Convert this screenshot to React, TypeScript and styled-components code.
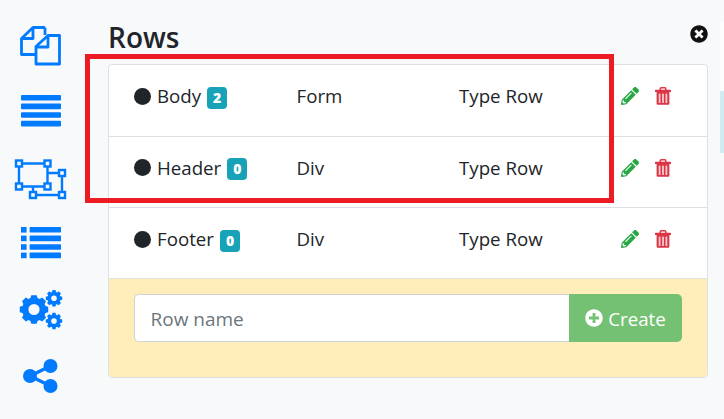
import React from "react";
import styled, { createGlobalStyle } from "styled-components";
import { FaPencilAlt, FaTimesCircle, FaPlusCircle } from "react-icons/fa";

const Global = createGlobalStyle`
  html, body { margin: 0; padding: 0; background: #f8f9fa; }
  body { font-family: "Open Sans", "Noto Sans", "Liberation Sans", sans-serif; color: #212529; }
`;

const Page = styled.div`
  position: relative;
  width: 724px;
  height: 419px;
  overflow: hidden;
  display: flex;
`;

const Rail = styled.nav`
  width: 80px;
  margin-right: 28px;
  display: flex;
  flex-direction: column;
  color: #007bff;
`;

const RailSlot = styled.div<{ $top: number; $left: number; $height: number }>`
  height: ${(p) => p.$height}px;
  margin-top: ${(p) => p.$top}px;
  padding-left: ${(p) => p.$left}px;
  display: flex;
  line-height: 0;
`;

const Main = styled.main`
  width: 600px;
  flex: none;
`;

const Title = styled.h1`
  margin: 19px 0 8px;
  font-size: 28px;
  line-height: 37px;
  font-weight: 600;
`;

const Card = styled.section`
  border: 1px solid #dfe0e1;
  border-radius: 4px;
  background: #fff;
  overflow: hidden;
  padding-top: 0.2px;
`;

const Row = styled.div`
  height: 71.4px;
  display: grid;
  grid-template-columns: 162.5px 162.5px 1fr 61px;
  padding: 17.1px 25px 0;
  align-items: start;
  box-sizing: border-box;
  border-bottom: 1px solid #dfe0e1;
  font-size: 18.7px;
  line-height: 28px;
`;

const NameCell = styled.div`
  display: flex;
  align-items: center;
`;

const Dot = styled.span`
  width: 17px;
  height: 17px;
  border-radius: 50%;
  background: #212529;
  margin-right: 6px;
`;

const Badge = styled.span`
  margin: 3px 0 0 6px;
  padding: 0 6px;
  height: 22px;
  min-width: 8px;
  border-radius: 4px;
  background: #17a2b8;
  color: #fff;
  font-size: 14px;
  line-height: 22px;
  font-weight: 800;
`;

const Actions = styled.div`
  display: flex;
  align-items: center;
  gap: 16px;
  height: 28px;
  font-size: 18px;
`;

const Edit = styled.span`
  display: flex;
  color: #28a745;
`;

const Remove = styled.span`
  display: flex;
  color: #dc3545;
`;

const Footer = styled.form`
  height: 98px;
  box-sizing: border-box;
  background: #ffeeba;
  padding: 15px 25px;
  display: flex;
  align-items: flex-start;
`;

const NameInput = styled.input`
  flex: 1;
  min-width: 0;
  height: 48px;
  box-sizing: border-box;
  border: 1px solid #ced4da;
  border-right: 0;
  border-radius: 5px 0 0 5px;
  padding: 2px 16px 0 15.5px;
  font: inherit;
  font-size: 19px;
  background: #fff;
  &::placeholder { color: #6c757d; opacity: 1; }
`;

const CreateButton = styled.button`
  width: 113px;
  height: 48px;
  border: 0;
  border-radius: 0 5px 5px 0;
  background: #74c174;
  color: #fff;
  font: inherit;
  font-size: 18.7px;
  padding: 0;
  display: flex;
  align-items: center;
  justify-content: center;
  gap: 5px;
`;

const CloseIcon = styled.span`
  position: absolute;
  left: 690px;
  top: 25px;
  display: flex;
  font-size: 18px;
  color: #111;
`;

const Callout = styled.div`
  position: absolute;
  left: 720px;
  top: 22px;
  width: 4px;
  height: 69px;
  background: #fdfdfe;
`;

const CalloutTint = styled.div`
  position: absolute;
  left: 720px;
  top: 91px;
  width: 4px;
  height: 62px;
  background: #d1ecf1;
`;

const Highlight = styled.div`
  position: absolute;
  left: 85px;
  top: 54px;
  width: 529px;
  height: 149px;
  box-sizing: border-box;
  border: 5px solid #ed1c24;
  pointer-events: none;
`;

const CopyIcon = () => (
  <svg width="42" height="40" viewBox="0 0 42 40" fill="none" stroke="currentColor" strokeWidth="2.8" strokeLinejoin="round">
    <path d="M25 1.5H13L1.5 12.5V28.5H16" />
    <path d="M13 1.5V12.5H1.5" />
    <path d="M25 1.5V9" />
    <path d="M39.5 9.5H28L16 20.5V38H39.5Z" />
    <path d="M28 9.5V21H16" />
  </svg>
);

const BarsIcon = () => (
  <svg width="40" height="32" viewBox="0 0 40 32" fill="currentColor">
    <rect x="0" y="0" width="40" height="5.6" rx="1" />
    <rect x="0" y="8.6" width="40" height="5.6" rx="1" />
    <rect x="0" y="17.2" width="40" height="5.6" rx="1" />
    <rect x="0" y="25.8" width="40" height="5.6" rx="1" />
  </svg>
);

const UngroupIcon = () => {
  const handles = [
    [5, 4.5], [33.5, 4.5], [5, 27.5], [33.5, 27.5],
    [48, 14], [48, 36], [19, 36],
  ];
  return (
    <svg width="53" height="41" viewBox="0 0 53 41" fill="none" stroke="currentColor" strokeWidth="2.4">
      <path d="M5 4.5H33.5M5 4.5V27.5M33.5 4.5V27.5M5 27.5H33.5" />
      <path d="M33.5 14H48V36H19V27.5" />
      {handles.map(([x, y]) => (
        <rect key={`${x}-${y}`} x={x - 3} y={y - 3} width="6" height="6" fill="#f8f9fa" />
      ))}
    </svg>
  );
};

const ListIcon = () => (
  <svg width="40" height="32" viewBox="0 0 40 32" fill="currentColor">
    {[0, 8.6, 17.2, 25.6].map((y) => (
      <g key={y}>
        <rect x="0" y={y} width="5.6" height="5.6" />
        <rect x="8.6" y={y} width="31.4" height="5.6" rx="0.8" />
      </g>
    ))}
  </svg>
);

const gearPath = (cx: number, cy: number, outer: number, root: number, hole: number, teeth: number, phase: number) => {
  const step = (Math.PI * 2) / teeth;
  const pts: string[] = [];
  for (let i = 0; i < teeth; i++) {
    const a = phase + i * step;
    const add = (ang: number, r: number) =>
      pts.push(`${(cx + r * Math.cos(ang)).toFixed(2)} ${(cy + r * Math.sin(ang)).toFixed(2)}`);
    add(a - step * 0.38, root);
    add(a - step * 0.24, outer);
    add(a + step * 0.24, outer);
    add(a + step * 0.38, root);
  }
  return `M${pts.join("L")}Z M${cx - hole} ${cy}a${hole} ${hole} 0 1 0 ${hole * 2} 0a${hole} ${hole} 0 1 0 ${-hole * 2} 0Z`;
};

const CogsIcon = () => (
  <svg width="44" height="40" viewBox="0 0 44 40" fill="currentColor" fillRule="evenodd">
    <path d={gearPath(15, 19.5, 14.5, 12, 5.6, 8, 0)} />
    <path d={gearPath(35, 8.3, 8.4, 6.6, 2.8, 8, 0)} />
    <path d={gearPath(35, 31, 8.4, 6.6, 2.8, 8, 0)} />
  </svg>
);

const ShareIcon = () => (
  <svg width="36" height="36" viewBox="0 0 36 36" fill="currentColor" stroke="currentColor">
    <path d="M8 17L28.5 7M8 17L28.5 27" strokeWidth="3.6" fill="none" />
    <circle cx="8" cy="17" r="7" stroke="none" />
    <circle cx="28.5" cy="7" r="7" stroke="none" />
    <circle cx="28.5" cy="27" r="7" stroke="none" />
  </svg>
);

const TrashIcon = () => (
  <svg width="16" height="18" viewBox="0 0 16 18" fill="currentColor">
    <path d="M5.2 3V1.9C5.2 1.2 5.7.8 6.3.8h3.4c.6 0 1.1.4 1.1 1.1V3" fill="none" stroke="currentColor" strokeWidth="1.5" />
    <rect x="0" y="2.7" width="16" height="2.4" rx="0.5" />
    <path d="M1.6 5h12.8v11.2c0 .9-.6 1.6-1.5 1.6H3.1c-.9 0-1.5-.7-1.5-1.6z" />
    <rect x="3.7" y="6.6" width="1.8" height="9.4" fill="#f6c9ce" />
    <rect x="7.1" y="6.6" width="1.8" height="9.4" fill="#f6c9ce" />
    <rect x="10.5" y="6.6" width="1.8" height="9.4" fill="#f6c9ce" />
  </svg>
);

const rows = [
  { name: "Body", count: 2, tag: "Form" },
  { name: "Header", count: 0, tag: "Div" },
  { name: "Footer", count: 0, tag: "Div" },
];

export default function App() {
  return (
    <Page>
      <Global />
      <Rail>
        <RailSlot $top={26} $left={20} $height={40}><CopyIcon /></RailSlot>
        <RailSlot $top={29} $left={20.5} $height={32}><BarsIcon /></RailSlot>
        <RailSlot $top={32} $left={14} $height={41}><UngroupIcon /></RailSlot>
        <RailSlot $top={27} $left={20.5} $height={32}><ListIcon /></RailSlot>
        <RailSlot $top={31} $left={18.5} $height={40}><CogsIcon /></RailSlot>
        <RailSlot $top={29} $left={22} $height={36}><ShareIcon /></RailSlot>
      </Rail>
      <Main>
        <Title>Rows</Title>
        <Card>
          {rows.map((r) => (
            <Row key={r.name}>
              <NameCell>
                <Dot />
                {r.name}
                <Badge>{r.count}</Badge>
              </NameCell>
              <div>{r.tag}</div>
              <div>Type Row</div>
              <Actions>
                <Edit><FaPencilAlt /></Edit>
                <Remove><TrashIcon /></Remove>
              </Actions>
            </Row>
          ))}
          <Footer>
            <NameInput placeholder="Row name" />
            <CreateButton type="button"><FaPlusCircle size={18} />Create</CreateButton>
          </Footer>
        </Card>
      </Main>
      <CloseIcon><FaTimesCircle /></CloseIcon>
      <Callout />
      <CalloutTint />
      <Highlight />
    </Page>
  );
}
